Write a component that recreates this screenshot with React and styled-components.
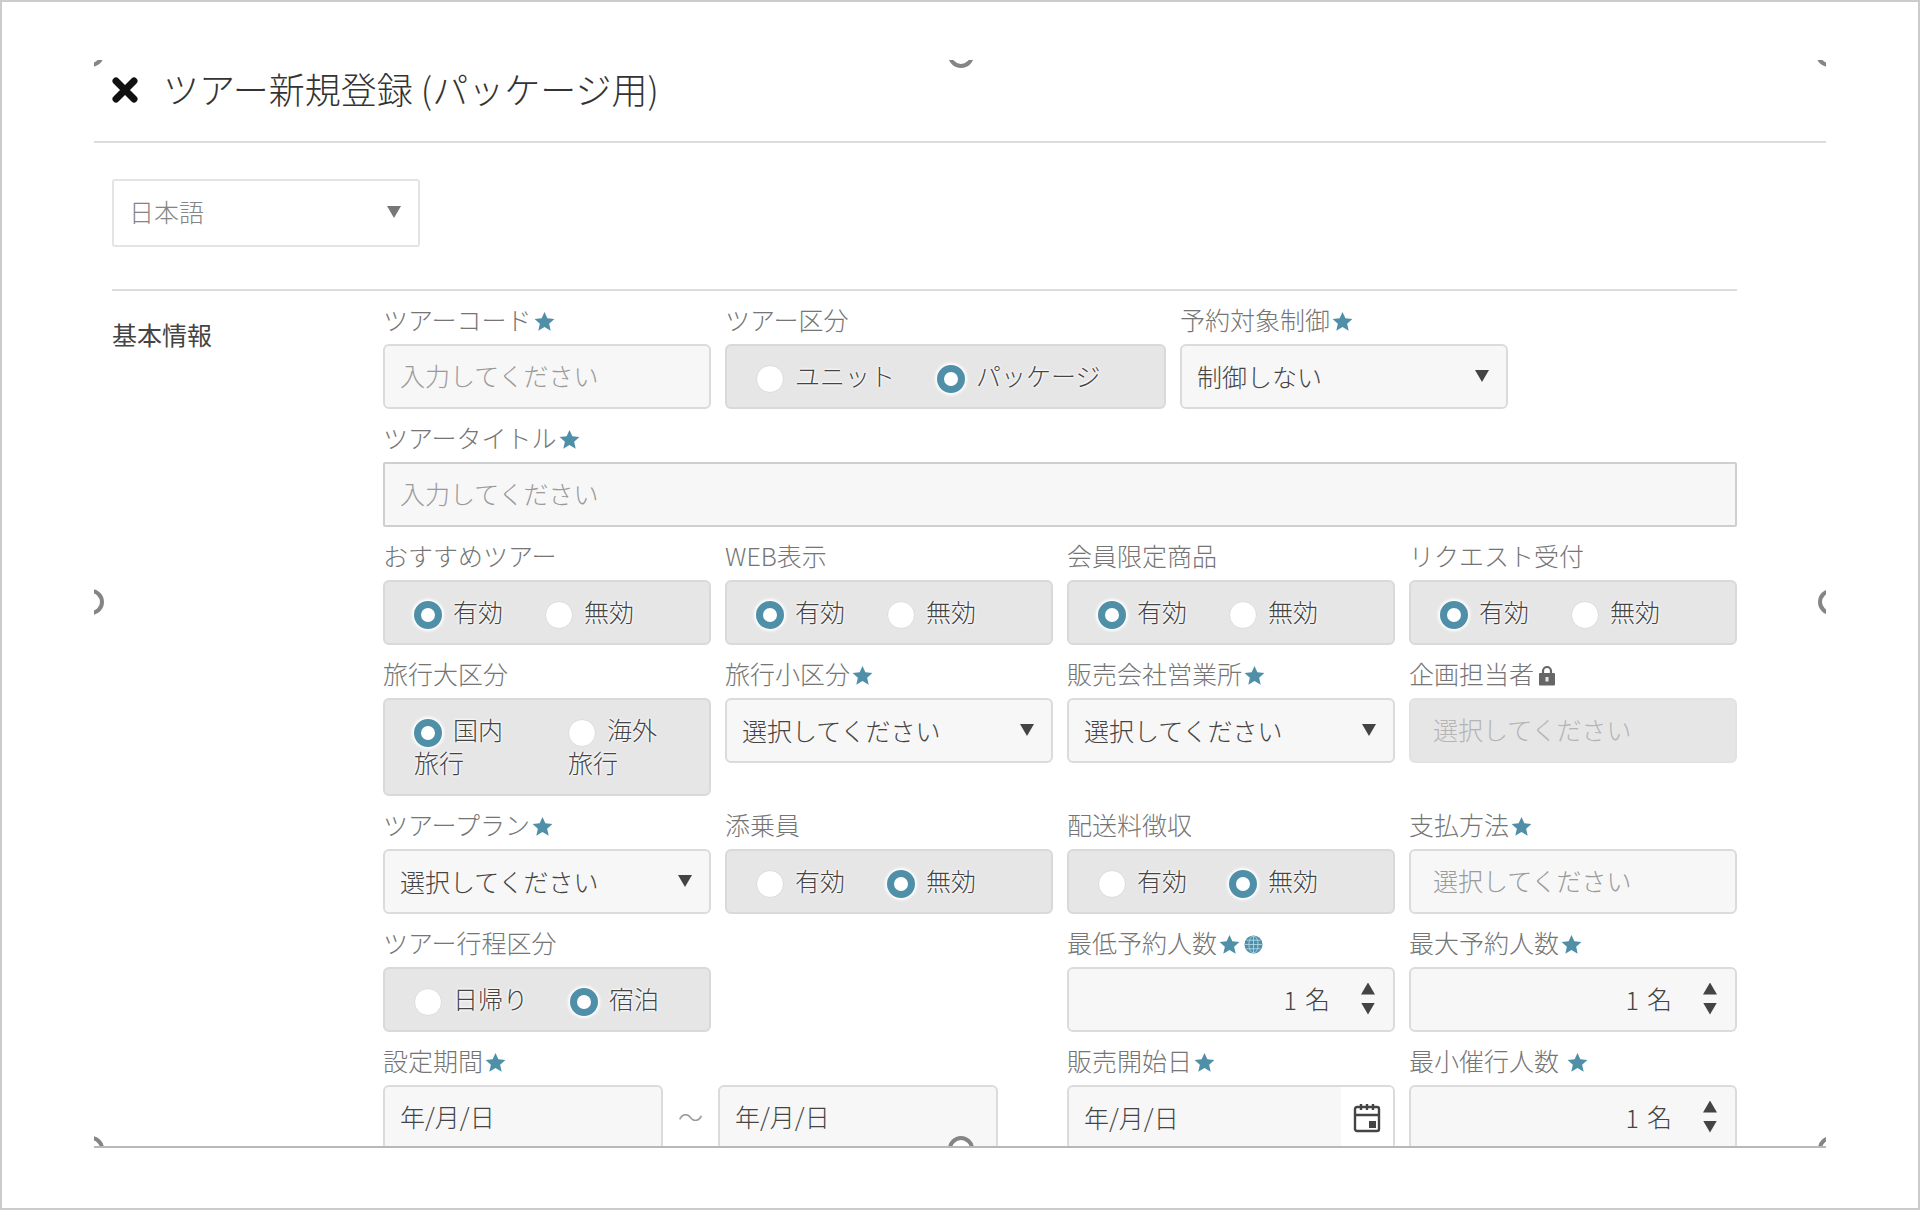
import React, { useId, useState } from 'react';
import styled, { createGlobalStyle, css } from 'styled-components';

const color = {
  text: '#444444',
  label: '#757575',
  muted: '#9a9a9a',
  accent: '#4f8fa8',
  field: '#f7f7f7',
  group: '#e6e6e6',
  border: '#dbdbdb',
};

const GlobalStyle = createGlobalStyle`
  *, *::before, *::after { box-sizing: border-box; }
  body { margin: 0; background: #fff; }
  body, input, select, button {
    font-family: "Noto Sans CJK JP", "Noto Sans", sans-serif;
    font-weight: 300;
    color: ${color.text};
  }
`;

const Page = styled.div`
  display: flex;
  height: 100vh;
  padding: 58px 92px 60px;
  border: 2px solid #cccccc;
`;

const Panel = styled.main`
  position: relative;
  flex: 1;
  min-width: 0;
  overflow: hidden;
  border-bottom: 2px solid #b8b8b8;
`;

const Header = styled.header`
  display: flex;
  align-items: center;
  gap: 24px;
  height: 83px;
  padding: 0 17px 22px;
  border-bottom: 2px solid #dcdcdc;
`;

const CloseButton = styled.button`
  display: flex;
  padding: 0;
  border: 0;
  background: none;
  color: #111;
`;

const Title = styled.h1`
  margin: 0;
  padding-bottom: 4px;
  font-size: 36px;
  line-height: 48px;
  font-weight: 300;
  color: #333;
`;

const Body = styled.form`
  padding: 36px 89px 0 18px;
`;

const Section = styled.section`
  display: grid;
  grid-template-columns: 271px 1fr;
  margin-top: 42px;
  border-top: 2px solid #dcdcdc;
`;

const SectionTitle = styled.h2`
  margin: 0;
  padding-top: 28px;
  font-size: 25px;
  line-height: 30px;
  font-weight: 400;
`;

const Rows = styled.div`
  display: flex;
  flex-direction: column;
  gap: 13px;
  padding-top: 13px;
`;

const Row = styled.div`
  display: grid;
  grid-template-columns: ${(p) => p.$columns || 'repeat(4, minmax(0, 1fr))'};
  gap: 14px;
  align-items: start;
`;

const FieldBox = styled.div`
  display: flex;
  flex-direction: column;
  gap: 10px;
  min-width: 0;
  grid-column: ${(p) => p.$start || 'auto'} / span ${(p) => p.$span || 1};
`;

const labelStyle = css`
  display: flex;
  align-items: center;
  gap: 2px;
  font-size: 25px;
  line-height: 30px;
  color: ${color.label};
  white-space: pre;

  svg {
    margin-top: 4px;
  }

  svg + svg {
    margin-left: 2px;
  }
`;

const Label = styled.label`
  ${labelStyle}
`;

const GroupLabel = styled.span`
  ${labelStyle}
`;

const boxStyle = css`
  width: 100%;
  height: 65px;
  border: 2px solid ${color.border};
  border-radius: 6px;
  background: ${color.field};
`;

const TextInput = styled.input`
  ${boxStyle}
  padding: 0 ${(p) => (p.$wide ? 22 : 15)}px 4px;
  font-size: 25px;
  outline: none;
  ${(p) => p.$sharp && 'border-color: #cfcfcf; border-radius: 2px;'}

  &::placeholder {
    color: ${(p) => (p.$dark ? color.text : color.muted)};
    opacity: 1;
  }

  &:disabled {
    background: ${color.group};
    border-color: #e2e2e2;
  }

  &:disabled::placeholder {
    color: #b4b4b4;
  }
`;

const SelectWrap = styled.div`
  position: relative;
  width: ${(p) => p.$width || 'auto'};

  &::after {
    content: '';
    position: absolute;
    top: calc(50% - 7px);
    right: 19px;
    border: 7px solid transparent;
    border-top: 12px solid ${(p) => (p.$plain ? '#777' : '#444')};
    border-bottom: 0;
    pointer-events: none;
  }
`;

const Select = styled.select`
  ${boxStyle}
  appearance: none;
  padding: 0 44px 2px 15px;
  font-size: 25px;
  outline: none;
  ${(p) => p.$plain && 'height: 68px; padding-bottom: 4px; border-color: #e4e4e4; border-radius: 3px; background: #fff; color: #858585;'}
`;

const RadioBox = styled.div`
  ${boxStyle}
  display: flex;
  gap: 42px;
  height: auto;
  padding: 13px 29px 15px;
  border-color: #d9d9d9;
  background: ${color.group};
`;

const Option = styled.label`
  min-width: 0;
  font-size: 25px;
  line-height: 33px;
  text-shadow: 0 0 3px #fff, 0 0 3px #fff, 0 0 2px #fff;
`;

const Radio = styled.input`
  appearance: none;
  width: 28px;
  height: 28px;
  margin: -4px 11px -4px 0;
  border: 1px solid #dcdcdc;
  border-radius: 50%;
  background: #fff;
  vertical-align: middle;

  &:checked {
    border: 7px solid ${color.accent};
    box-shadow: 0 0 3px 2px #fff;
  }
`;

const CompoundBox = styled.div`
  ${boxStyle}
  display: flex;
  align-items: center;
  overflow: hidden;
`;

const BareInput = styled.input`
  flex: 1;
  min-width: 0;
  height: 100%;
  padding: 0 0 2px 15px;
  border: 0;
  outline: none;
  background: none;
  font-size: 25px;
  text-align: ${(p) => p.$align || 'left'};

  &::placeholder {
    color: ${color.text};
    opacity: 1;
  }
`;

const Unit = styled.span`
  padding: 0 31px 2px 8px;
  font-size: 25px;
  line-height: 33px;
`;

const Stepper = styled.div`
  display: flex;
  flex-direction: column;
  gap: 8px;
  padding: 0 18px 2px 0;
`;

const StepButton = styled.button`
  width: 14px;
  height: 12px;
  padding: 0;
  border: 0;
  background: #444;
  clip-path: ${(p) => (p.$up ? 'polygon(50% 0, 100% 100%, 0 100%)' : 'polygon(0 0, 100% 0, 50% 100%)')};
`;

const CalendarButton = styled.button`
  display: flex;
  align-items: center;
  justify-content: center;
  width: 52px;
  height: 100%;
  padding: 0;
  border: 0;
  background: #fff;
`;

const Period = styled.div`
  display: grid;
  grid-template-columns: 280fr 55fr 280fr 55fr;
  align-items: center;
`;

const Tilde = styled.span`
  padding-bottom: 4px;
  font-size: 25px;
  line-height: 30px;
  text-align: center;
  color: #999;
`;

const Handle = styled.span`
  position: absolute;
  left: ${(p) => p.$left};
  top: ${(p) => p.$top};
  width: 26px;
  height: 26px;
  margin: -13px;
  border: 4px solid #858585;
  border-radius: 50%;
  background: #fff;
  pointer-events: none;
`;

const HandleLayer = styled.div`
  position: absolute;
  inset: 0 0 -2px;
  overflow: hidden;
  pointer-events: none;
`;

const Star = () => (
  <svg width="21" height="21" viewBox="0 0 24 24" fill={color.accent} aria-label="必須">
    <path d="M12 1l3.3 7.4 8 .8-6 5.4 1.8 7.9L12 18.4l-7.100 4.100 1.800-7.900-6-5.400 8-.8z" />
  </svg>
);

const Globe = () => (
  <svg width="19" height="19" viewBox="0 0 20 20" aria-hidden="true">
    <circle cx="10" cy="10" r="9.500" fill={color.accent} />
    <g fill="none" stroke="#a9d3e0" strokeWidth="1">
      <path d="M10 1v18M1 10h18M2.500 5.500h15M2.500 14.500h15" />
      <ellipse cx="10" cy="10" rx="4.800" ry="9" />
    </g>
  </svg>
);

const Lock = () => (
  <svg width="22" height="21" viewBox="0 0 22 21" aria-hidden="true">
    <path d="M7 9V6a4 4 0 0 1 8 0v3" fill="none" stroke="#666" strokeWidth="2.200" />
    <rect x="3" y="8" width="16" height="12.500" rx="1" fill="#666" />
    <rect x="9.500" y="12" width="3" height="4.500" fill="#e6e6e6" />
  </svg>
);

const Cross = () => (
  <svg width="28" height="26" viewBox="0 0 28 26" aria-hidden="true">
    <path d="M5 4l18 18M23 4L5 22" stroke="currentColor" strokeWidth="7" strokeLinecap="round" />
  </svg>
);

const CalendarIcon = () => (
  <svg width="30" height="30" viewBox="0 0 30 30" fill="none" stroke="#444" aria-hidden="true">
    <rect x="3" y="4" width="24" height="24" rx="2" strokeWidth="2.400" />
    <path d="M3 12h24" strokeWidth="2.400" />
    <path d="M9 1v6M15 1v6M21 1v6" strokeWidth="2.400" />
    <rect x="17" y="18" width="7" height="7" fill="#444" stroke="none" />
  </svg>
);

const marks = { star: Star, globe: Globe, lock: Lock };
const Marks = ({ names = [] }) => names.map((name) => React.createElement(marks[name], { key: name }));

function TextField({ label, marks: names, span, ...input }) {
  const id = useId();
  return (
    <FieldBox $span={span}>
      <Label htmlFor={id}>{label}<Marks names={names} /></Label>
      <TextInput id={id} type="text" {...input} />
    </FieldBox>
  );
}

function SelectField({ label, value }) {
  const id = useId();
  return (
    <FieldBox>
      <Label htmlFor={id}>{label}<Star /></Label>
      <SelectWrap>
        <Select id={id}><option>{value}</option></Select>
      </SelectWrap>
    </FieldBox>
  );
}

function RadioField({ label, options = ['有効', '無効'], selected = 0 }) {
  const id = useId();
  return (
    <FieldBox>
      <GroupLabel id={id}>{label}</GroupLabel>
      <RadioBox role="radiogroup" aria-labelledby={id}>
        {options.map((option, i) => (
          <Option key={option}>
            <Radio type="radio" name={id} defaultChecked={i === selected} />
            {option}
          </Option>
        ))}
      </RadioBox>
    </FieldBox>
  );
}

function NumberField({ label, start, marks: names = ['star'] }) {
  const id = useId();
  const [count, setCount] = useState(1);
  return (
    <FieldBox $start={start}>
      <Label htmlFor={id}>{label}<Marks names={names} /></Label>
      <CompoundBox>
        <BareInput
          id={id}
          inputMode="numeric"
          $align="right"
          value={count}
          onChange={(e) => setCount(Number(e.target.value) || 0)}
        />
        <Unit>名</Unit>
        <Stepper>
          <StepButton type="button" $up aria-label="増やす" onClick={() => setCount(count + 1)} />
          <StepButton type="button" aria-label="減らす" onClick={() => setCount(Math.max(0, count - 1))} />
        </Stepper>
      </CompoundBox>
    </FieldBox>
  );
}

function PeriodField() {
  const id = useId();
  return (
    <FieldBox $span={2}>
      <Label htmlFor={id}>設定期間<Star /></Label>
      <Period>
        <TextInput id={id} $dark placeholder="年/月/日" />
        <Tilde>～</Tilde>
        <TextInput $dark placeholder="年/月/日" aria-label="設定期間 終了" />
      </Period>
    </FieldBox>
  );
}

function DateField({ label }) {
  const id = useId();
  return (
    <FieldBox>
      <Label htmlFor={id}>{label}<Star /></Label>
      <CompoundBox>
        <BareInput id={id} placeholder="年/月/日" />
        <CalendarButton type="button" aria-label="カレンダー"><CalendarIcon /></CalendarButton>
      </CompoundBox>
    </FieldBox>
  );
}

const handles = [
  ['-3px', '-6px'], ['calc(50% + 1px)', '-5px'], ['calc(100% + 3px)', '-6px'],
  ['-3px', 'calc(50% - 2px)'], ['calc(100% + 5px)', 'calc(50% - 2px)'],
  ['-3px', 'calc(100% + 1px)'], ['calc(50% + 1px)', 'calc(100% + 1px)'], ['calc(100% + 5px)', 'calc(100% + 1px)'],
];

export default function App() {
  return (
    <>
      <GlobalStyle />
      <Page>
        <Panel>
          <Header>
            <CloseButton type="button" aria-label="閉じる"><Cross /></CloseButton>
            <Title>ツアー新規登録 (パッケージ用)</Title>
          </Header>
          <Body>
            <SelectWrap $width="308px" $plain>
              <Select $plain aria-label="言語"><option>日本語</option></Select>
            </SelectWrap>
            <Section>
              <SectionTitle>基本情報</SectionTitle>
              <Rows>
                <Row $columns="328fr 441fr 328fr 215fr">
                  <TextField label="ツアーコード" marks={['star']} placeholder="入力してください" />
                  <RadioField label="ツアー区分" options={['ユニット', 'パッケージ']} selected={1} />
                  <SelectField label="予約対象制御" value="制御しない" />
                </Row>
                <Row>
                  <TextField label="ツアータイトル" marks={['star']} span={4} $sharp placeholder="入力してください" />
                </Row>
                <Row>
                  <RadioField label="おすすめツアー" />
                  <RadioField label="WEB表示" />
                  <RadioField label="会員限定商品" />
                  <RadioField label="リクエスト受付" />
                </Row>
                <Row>
                  <RadioField label="旅行大区分" options={['国内旅行', '海外旅行']} />
                  <SelectField label="旅行小区分" value="選択してください" />
                  <SelectField label="販売会社営業所" value="選択してください" />
                  <TextField label="企画担当者" marks={['lock']} $wide disabled placeholder="選択してください" />
                </Row>
                <Row>
                  <SelectField label="ツアープラン" value="選択してください" />
                  <RadioField label="添乗員" selected={1} />
                  <RadioField label="配送料徴収" selected={1} />
                  <TextField label="支払方法" marks={['star']} $wide placeholder="選択してください" />
                </Row>
                <Row>
                  <RadioField label="ツアー行程区分" options={['日帰り', '宿泊']} selected={1} />
                  <NumberField label="最低予約人数" start={3} marks={['star', 'globe']} />
                  <NumberField label="最大予約人数" />
                </Row>
                <Row>
                  <PeriodField />
                  <DateField label="販売開始日" />
                  <NumberField label="最小催行人数 " />
                </Row>
              </Rows>
            </Section>
          </Body>
          <HandleLayer aria-hidden="true">
            {handles.map(([left, top]) => (
              <Handle key={left + top} $left={left} $top={top} />
            ))}
          </HandleLayer>
        </Panel>
      </Page>
    </>
  );
}
